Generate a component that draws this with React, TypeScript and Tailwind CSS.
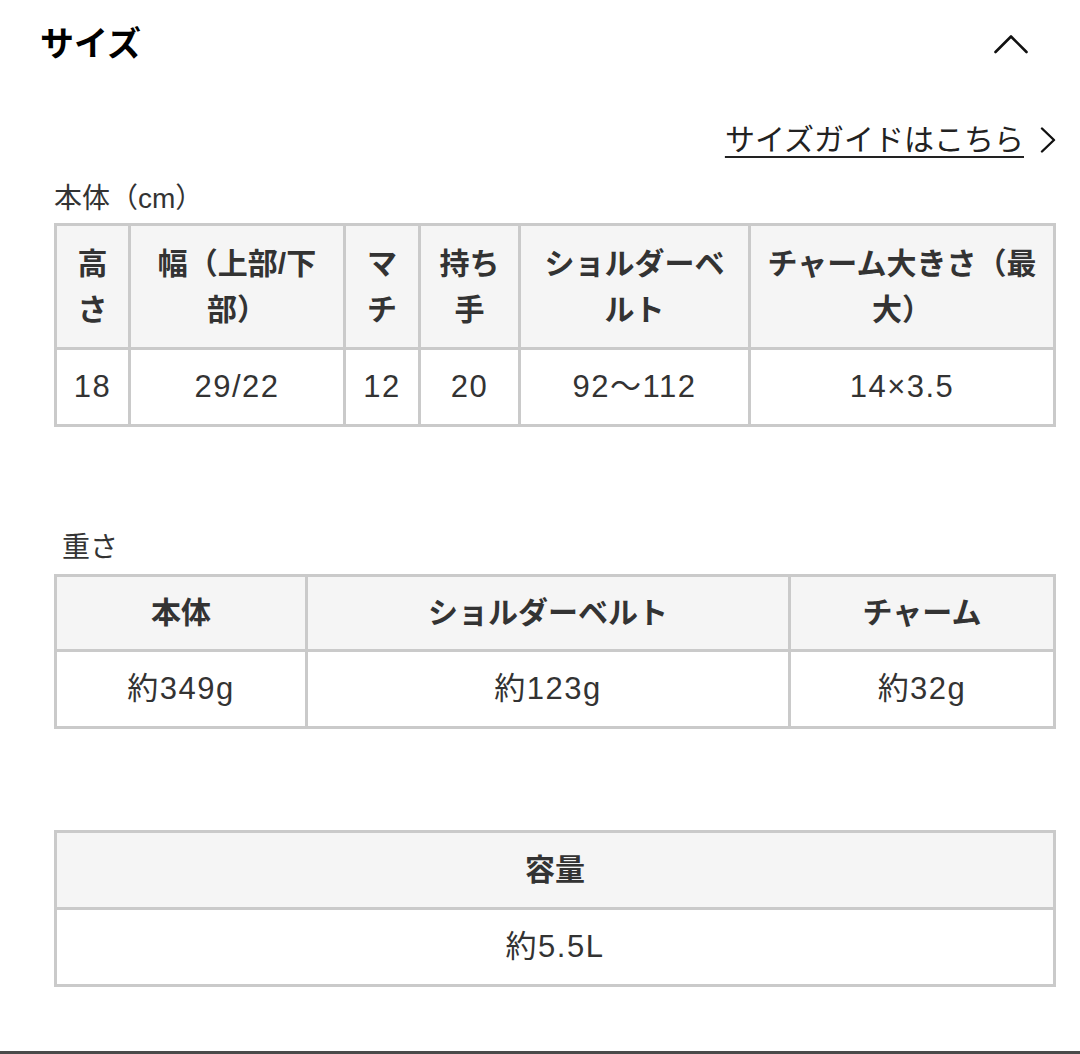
import React from "react";

const font = { fontFamily: '"Liberation Sans", "Noto Sans CJK JP", sans-serif' };

function HCell({ children }: { children: React.ReactNode }) {
  return (
    <div className="bg-[#f5f5f5] flex items-center justify-center text-center px-3 text-[30px] leading-[46px] font-bold text-[#333]">
      <div>{children}</div>
    </div>
  );
}

function BCell({ children }: { children: React.ReactNode }) {
  return (
    <div className="bg-white flex items-center justify-center text-center px-3 text-[31px] tracking-[1.5px] leading-[46px] text-[#333]">
      {children}
    </div>
  );
}

export default function App() {
  return (
    <div className="w-[1080px] h-[1054px] bg-white flex flex-col overflow-hidden" style={font}>
      <div className="h-[88px] flex items-center justify-between pl-[40px] pr-[52px]">
        <div className="text-[34px] font-bold text-black leading-none">サイズ</div>
        <svg width="34" height="20" viewBox="0 0 34 20" fill="none">
          <path d="M1.5 18 L17 2.5 L32.5 18" stroke="#111" strokeWidth="2.6" strokeLinecap="round" strokeLinejoin="round" />
        </svg>
      </div>

      <div className="mt-[32px] h-[40px] flex items-center justify-end pr-[24px] gap-[16px]">
        <span className="text-[30px] leading-[40px] text-[#222] underline decoration-2 underline-offset-[6px]">
          サイズガイドはこちら
        </span>
        <svg width="16" height="26" viewBox="0 0 16 26" fill="none">
          <path d="M2 1.5 L14 13 L2 24.5" stroke="#111" strokeWidth="2.4" strokeLinecap="round" strokeLinejoin="round" />
        </svg>
      </div>

      <div className="mt-[21px] h-[36px] flex items-center pl-[54px] text-[28px] text-[#333]">本体（cm）</div>

      <div className="mt-[6px] ml-[54px] w-[1002px] grid grid-cols-[71px_212px_72px_97px_227px_302px] grid-rows-[121px_74px] gap-[3px] p-[3px] bg-[#cacaca]">
        <HCell>高さ</HCell>
        <HCell>幅（上部/下部）</HCell>
        <HCell>マチ</HCell>
        <HCell>持ち手</HCell>
        <HCell>ショルダーベルト</HCell>
        <HCell>チャーム大きさ（最大）</HCell>
        <BCell>18</BCell>
        <BCell>29/22</BCell>
        <BCell>12</BCell>
        <BCell>20</BCell>
        <BCell>92〜112</BCell>
        <BCell>14×3.5</BCell>
      </div>

      <div className="mt-[103px] h-[36px] flex items-center pl-[62px] text-[28px] text-[#333]">重さ</div>

      <div className="mt-[8px] ml-[54px] w-[1002px] grid grid-cols-[248px_480px_262px] grid-rows-[72px_74px] gap-[3px] p-[3px] bg-[#cacaca]">
        <HCell>本体</HCell>
        <HCell>ショルダーベルト</HCell>
        <HCell>チャーム</HCell>
        <BCell>約349g</BCell>
        <BCell>約123g</BCell>
        <BCell>約32g</BCell>
      </div>

      <div className="mt-[101px] ml-[54px] w-[1002px] grid grid-cols-[996px] grid-rows-[74px_74px] gap-[3px] p-[3px] bg-[#cacaca]">
        <HCell>容量</HCell>
        <BCell>約5.5L</BCell>
      </div>

      <div className="mt-auto h-[3px] bg-[#4a4a4a]" />
    </div>
  );
}
